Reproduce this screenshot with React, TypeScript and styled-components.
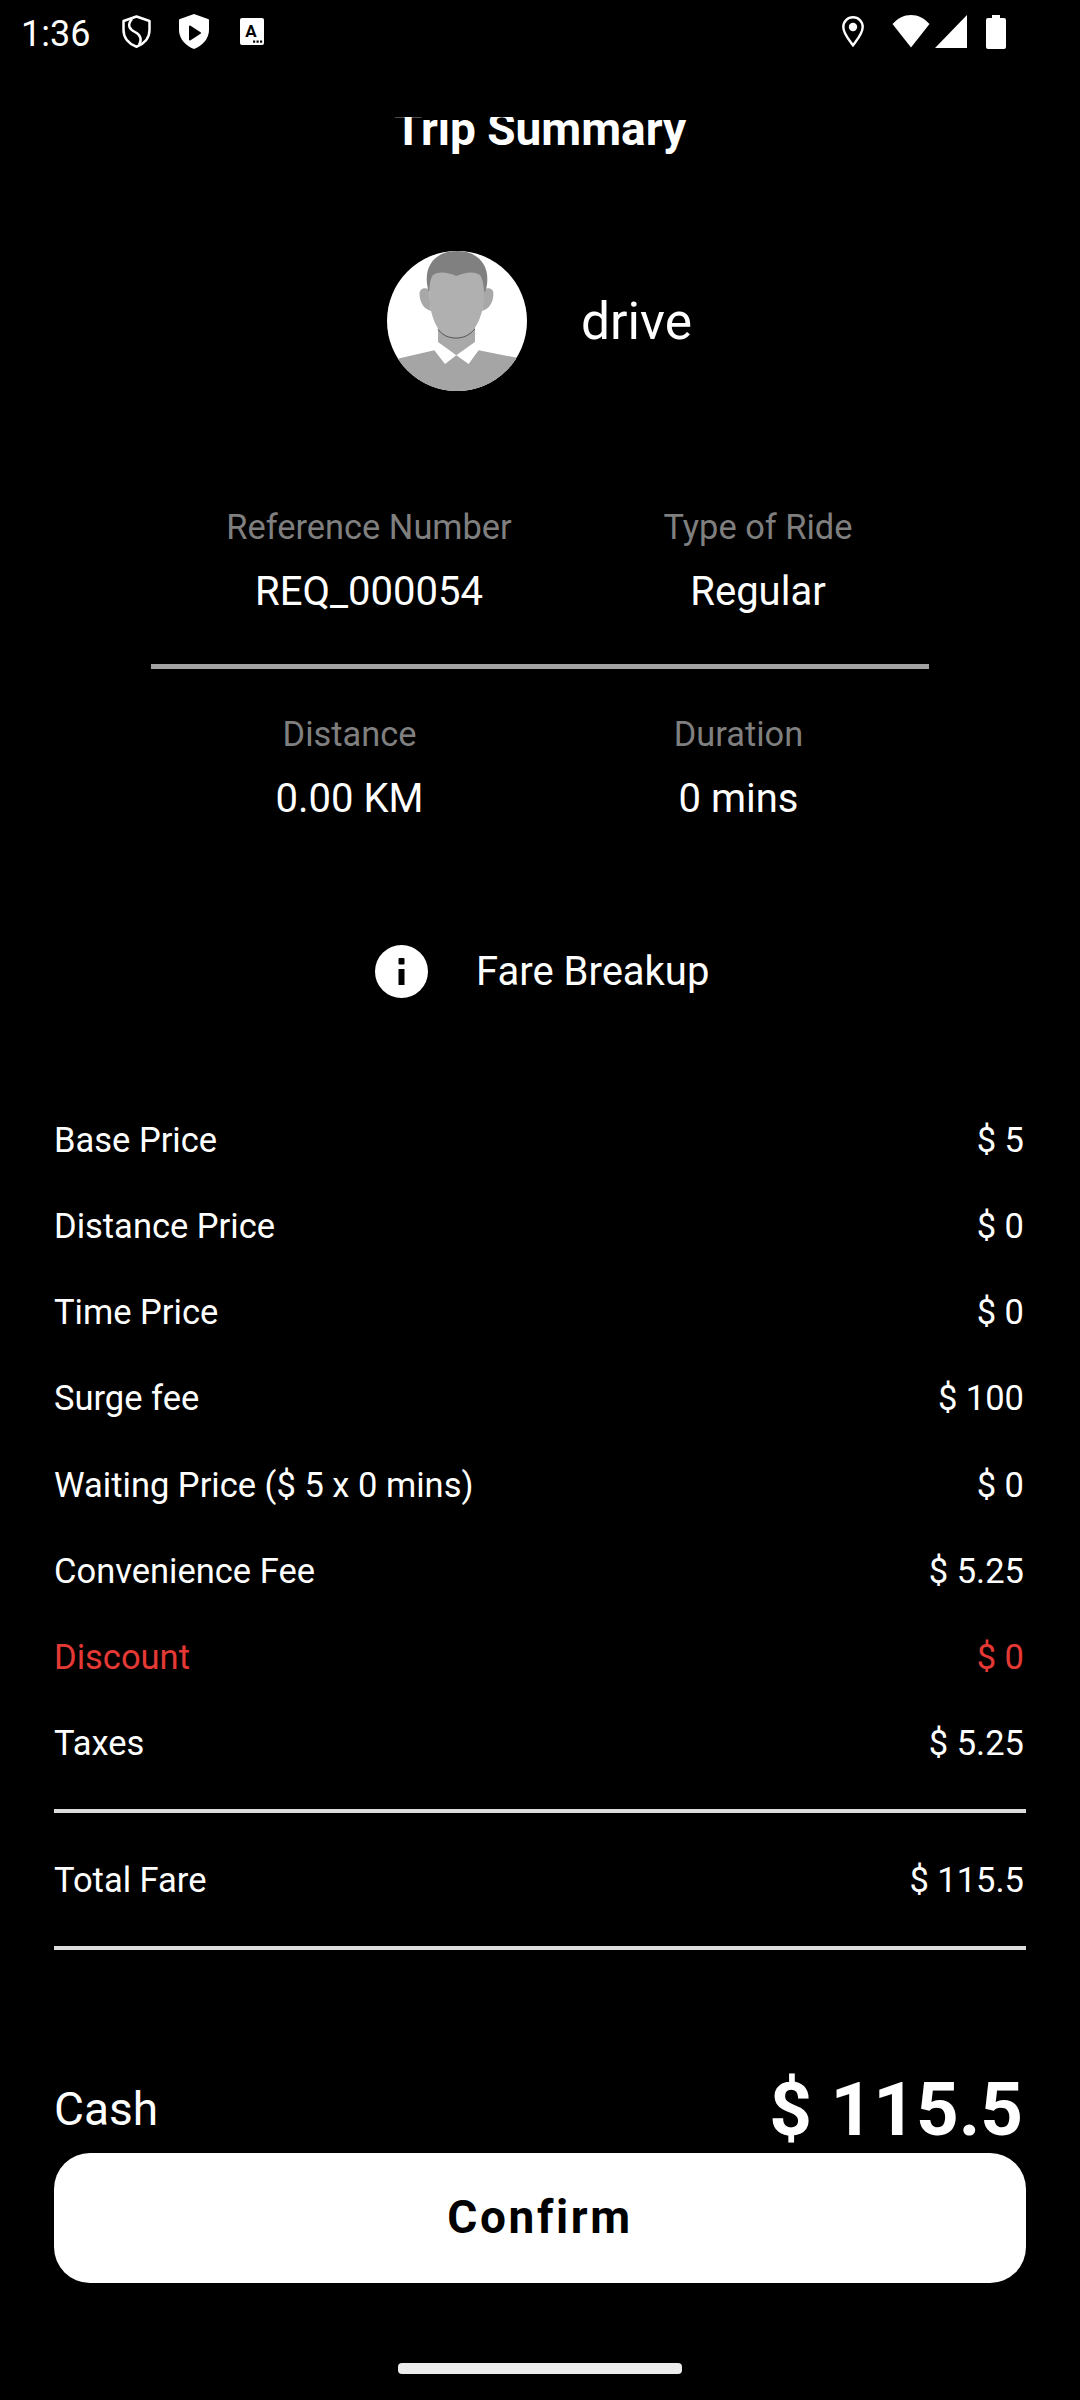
import React from "react";
import styled, { createGlobalStyle } from "styled-components";

const Global = createGlobalStyle`
  html, body { margin: 0; padding: 0; background: #000; }
  body { font-family: Roboto, "Liberation Sans", sans-serif; color: #fff; }
`;

const Screen = styled.div`
  width: 1080px;
  height: 2400px;
  background: #000;
  display: flex;
  flex-direction: column;
  overflow: hidden;
`;

const StatusBar = styled.div`
  height: 63px;
  flex: none;
  display: flex;
  align-items: center;
  padding: 0 74px 0 21px;
  box-sizing: border-box;
`;

const Clock = styled.span`
  font-size: 36px;
  font-weight: 400;
  width: 100.7px;
  margin-top: 4px;
  flex: none;
`;

const StatusGroup = styled.div`
  display: flex;
  align-items: center;
`;

const StatusRight = styled(StatusGroup)`
  margin-left: auto;
`;

const StatusIcon = styled.svg<{ $gap?: number }>`
  display: block;
  flex: none;
  margin-left: ${(p) => p.$gap ?? 0}px;
`;

const TitleClip = styled.div`
  height: 40px;
  margin-top: 54px;
  overflow: hidden;
  flex: none;
`;

const Title = styled.h1`
  margin: -18px 0 0;
  font-size: 46px;
  line-height: 60px;
  font-weight: 700;
  text-align: center;
`;

const Driver = styled.div`
  margin-top: 94px;
  height: 140px;
  display: flex;
  align-items: center;
  padding-left: 387px;
  gap: 54px;
  flex: none;
`;

const DriverName = styled.span`
  font-size: 51.5px;
  font-weight: 400;
`;

const StatGrid = styled.div<{ $top: number; $left: number }>`
  margin-top: ${(p) => p.$top}px;
  padding-left: ${(p) => p.$left}px;
  display: grid;
  grid-template-columns: 389px 389px;
  flex: none;
`;

const Stat = styled.div`
  text-align: center;
`;

const StatLabel = styled.div`
  font-size: 34.4px;
  line-height: 40px;
  color: #7f7f7f;
`;

const StatValue = styled.div`
  margin-top: 21px;
  font-size: 40px;
  line-height: 48px;
  color: #fff;
`;

const Rule = styled.div`
  margin: 48px 0 0 151px;
  width: 778px;
  height: 5px;
  background: #a3a3a3;
  flex: none;
`;

const BreakupRow = styled.div`
  margin-top: 122px;
  height: 53px;
  flex: none;
  display: flex;
  align-items: center;
  padding-left: 375px;
  gap: 48px;
  font-size: 40px;
`;

const FareList = styled.div`
  margin: 99px 54px 0;
  flex: none;
`;

const FareRow = styled.div<{ $danger?: boolean }>`
  height: 86.15px;
  display: flex;
  align-items: center;
  justify-content: space-between;
  font-size: 34.5px;
  color: ${(p) => (p.$danger ? "#e53935" : "#fff")};
`;

const FareValue = styled.span`
  margin-right: 2px;
`;

const FareRule = styled.div<{ $top: number }>`
  height: 4px;
  background: #dcdcdc;
  margin-top: ${(p) => p.$top}px;
`;

const TotalRow = styled(FareRow)`
  height: 133px;
`;

const PayRow = styled.div`
  margin: 123px 54px 0;
  height: 74px;
  display: flex;
  align-items: flex-end;
  justify-content: space-between;
  flex: none;
`;

const PayMethod = styled.span`
  font-size: 46px;
  line-height: 54px;
  margin-bottom: 11px;
`;

const PayAmount = styled.span`
  font-size: 74.5px;
  line-height: 74px;
  font-weight: 700;
  margin-right: 3px;
`;

const ConfirmButton = styled.button`
  margin: 6px 54px 0;
  height: 130px;
  flex: none;
  border: 0;
  padding: 0 0 3px;
  border-radius: 36px;
  background: #fff;
  color: #000;
  font-family: Roboto, sans-serif;
  font-size: 46px;
  font-weight: 700;
  letter-spacing: 2.6px;
`;

const HomeBar = styled.div`
  margin: 80px auto 0;
  width: 284px;
  height: 11px;
  border-radius: 4px;
  background: #ececec;
  flex: none;
`;

const fares: { label: string; value: string; danger?: boolean }[] = [
  { label: "Base Price", value: "$ 5" },
  { label: "Distance Price", value: "$ 0" },
  { label: "Time Price", value: "$ 0" },
  { label: "Surge fee", value: "$ 100" },
  { label: "Waiting Price ($ 5 x 0 mins)", value: "$ 0" },
  { label: "Convenience Fee", value: "$ 5.25" },
  { label: "Discount", value: "$ 0", danger: true },
  { label: "Taxes", value: "$ 5.25" },
];

const Avatar = () => (
  <svg width="140" height="140" viewBox="0 0 140 140">
    <defs>
      <clipPath id="disc"><circle cx="70" cy="70" r="70" /></clipPath>
    </defs>
    <g clipPath="url(#disc)">
      <rect width="140" height="140" fill="#fff" />
      <path d="M11.6 107.6 L47.3 99.3 L58 113 L69.3 104.3 L81.6 113 L91.6 99.3 L129 106.6 L140 140 L0 140 Z" fill="#a5a5a5" />
      <path d="M51 70 V91 L69.3 104.3 L88 91 V70 Z" fill="#a9a9a9" />
      <path d="M42 38 C36 36 32 38 32.6 44 C33 52 37 58 44 60 Z" fill="#a8a8a8" />
      <path d="M97 38 C103 36 107 38 106.4 44 C106 52 102 58 95 60 Z" fill="#a8a8a8" />
      <path d="M41.6 40 C35 18 46 0 70 0 C94 0 105 18 98.5 40 L92 44 L47 44 Z" fill="#808080" />
      <path d="M42.3 46 C42 36 43 28 46 24 C52 20 60 21 69.5 25 C79 21 87 20 93 24 C96.5 29 97.3 38 97 46 C96.5 60 92 74 83 82.6 C75 88.6 63 88.6 55 82.6 C47 74 42.8 60 42.3 46 Z" fill="#b0b0b0" />
      <path d="M51 78.5 C53 80.5 54 81.6 55 82.6 C63 88.6 75 88.6 83 82.6 C84.5 81.5 86 80 88 78" fill="none" stroke="#555" strokeWidth="1" />
    </g>
  </svg>
);

const InfoIcon = () => (
  <svg width="53" height="53" viewBox="0 0 53 53">
    <circle cx="26.5" cy="26.5" r="26.5" fill="#fff" />
    <rect x="23.5" y="13" width="6" height="6.5" rx="1" fill="#000" />
    <rect x="23.5" y="24" width="6" height="16" fill="#000" />
  </svg>
);

const ShieldOutline = () => (
  <StatusIcon width="29" height="33" viewBox="0 0 29 33" $gap={0}>
    <path d="M14.5 1.5 L27.5 6 V15 C27.5 23 22 29 14.5 31.7 C7 29 1.5 23 1.5 15 V6 Z" fill="none" stroke="#fff" strokeWidth="2.5" strokeLinejoin="round" />
    <path d="M10 4 C5 10 7 14 13 17 C19 20 20 25 17 30" fill="none" stroke="#fff" strokeWidth="2.5" />
  </StatusIcon>
);

const ShieldPlay = () => (
  <StatusIcon width="30" height="35" viewBox="0 0 30 35" $gap={28.3}>
    <path d="M15 0 L29 5 C30 5.3 30 6 30 7 V16 C30 25 23 32 15 35 C7 32 0 25 0 16 V7 C0 6 0 5.3 1 5 Z" fill="#fff" />
    <path d="M11 12.5 L21 19 L11 25.5 Z" fill="#000" stroke="#000" strokeWidth="2" strokeLinejoin="round" />
  </StatusIcon>
);

const KeyboardA = () => (
  <StatusIcon width="24" height="27" viewBox="0 0 24 27" $gap={31}>
    <rect width="24" height="27" rx="2" fill="#fff" />
    <text x="11" y="19" fontSize="17" fontWeight="700" textAnchor="middle" fontFamily="Roboto, sans-serif" fill="#000">A</text>
    <rect x="13" y="22.5" width="2.2" height="2.2" fill="#000" />
    <rect x="16.5" y="22.5" width="2.2" height="2.2" fill="#000" />
    <rect x="20" y="22.5" width="2.2" height="2.2" fill="#000" />
  </StatusIcon>
);

const PinOutline = () => (
  <StatusIcon width="22" height="31" viewBox="0 0 22 31">
    <path d="M11 1.3 C5.5 1.3 1.3 5.5 1.3 11 C1.3 18 8 25 11 29.3 C14 25 20.7 18 20.7 11 C20.7 5.5 16.5 1.3 11 1.3 Z" fill="none" stroke="#fff" strokeWidth="2.4" />
    <circle cx="11" cy="11" r="4.2" fill="#fff" />
  </StatusIcon>
);

const Wifi = () => (
  <StatusIcon width="38" height="33" viewBox="0 0 38 33" $gap={28}>
    <path d="M19 32.5 L0.5 9 C6 3 12 0 19 0 C26 0 32 3 37.5 9 Z" fill="#fff" />
  </StatusIcon>
);

const Cell = () => (
  <StatusIcon width="32" height="33" viewBox="0 0 32 33" $gap={5}>
    <path d="M32 0 V33 H0 Z" fill="#fff" />
  </StatusIcon>
);

const Battery = () => (
  <StatusIcon width="20" height="34" viewBox="0 0 20 34" $gap={19}>
    <path d="M6 0 H14 V3 H18 A2 2 0 0 1 20 5 V32 A2 2 0 0 1 18 34 H2 A2 2 0 0 1 0 32 V5 A2 2 0 0 1 2 3 H6 Z" fill="#fff" />
  </StatusIcon>
);

export default function App() {
  return (
    <Screen>
      <Global />
      <StatusBar>
        <Clock>1:36</Clock>
        <StatusGroup>
          <ShieldOutline />
          <ShieldPlay />
          <KeyboardA />
        </StatusGroup>
        <StatusRight>
          <PinOutline />
          <Wifi />
          <Cell />
          <Battery />
        </StatusRight>
      </StatusBar>
      <TitleClip>
        <Title>Trip Summary</Title>
      </TitleClip>
      <Driver>
        <Avatar />
        <DriverName>drive</DriverName>
      </Driver>
      <StatGrid $top={116} $left={174.5}>
        <Stat>
          <StatLabel>Reference Number</StatLabel>
          <StatValue>REQ_000054</StatValue>
        </Stat>
        <Stat>
          <StatLabel>Type of Ride</StatLabel>
          <StatValue>Regular</StatValue>
        </Stat>
      </StatGrid>
      <Rule />
      <StatGrid $top={45} $left={155}>
        <Stat>
          <StatLabel>Distance</StatLabel>
          <StatValue>0.00 KM</StatValue>
        </Stat>
        <Stat>
          <StatLabel>Duration</StatLabel>
          <StatValue>0 mins</StatValue>
        </Stat>
      </StatGrid>
      <BreakupRow>
        <InfoIcon />
        <span>Fare Breakup</span>
      </BreakupRow>
      <FareList>
        {fares.map((f) => (
          <FareRow key={f.label} $danger={f.danger}>
            <span>{f.label}</span>
            <FareValue>{f.value}</FareValue>
          </FareRow>
        ))}
        <FareRule $top={23} />
        <TotalRow>
          <span>Total Fare</span>
          <FareValue>$ 115.5</FareValue>
        </TotalRow>
        <FareRule $top={0} />
      </FareList>
      <PayRow>
        <PayMethod>Cash</PayMethod>
        <PayAmount>$ 115.5</PayAmount>
      </PayRow>
      <ConfirmButton>Confirm</ConfirmButton>
      <HomeBar />
    </Screen>
  );
}
